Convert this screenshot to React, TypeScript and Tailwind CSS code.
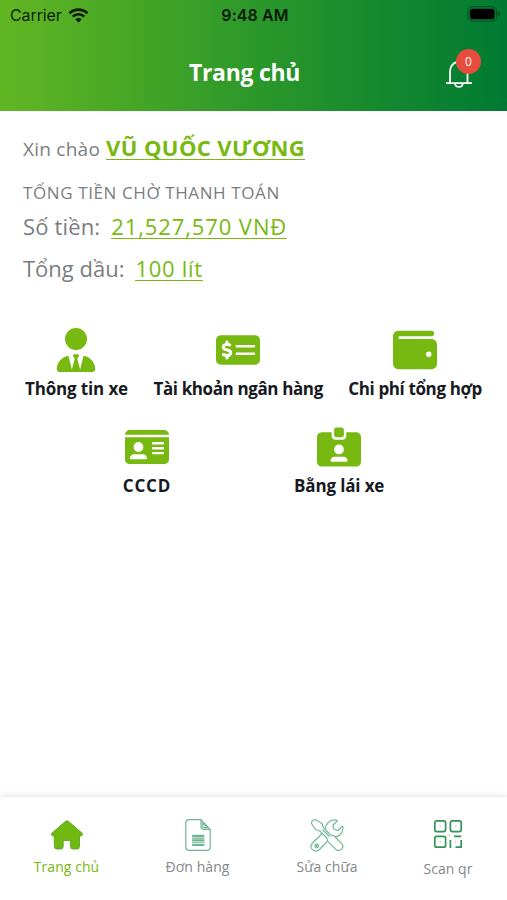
import React from 'react';
import { FaUserTie, FaMoneyCheckDollar, FaWallet, FaIdCard, FaIdCardClip } from 'react-icons/fa6';

const font = "font-['Open_Sans','Noto_Sans',sans-serif]";

const StatusBar: React.FC = () => (
    <div className="flex h-[30px] items-center justify-between pl-[10px] pr-[7px] font-['Inter',sans-serif] text-black/85">
        <div className="flex w-[210px] items-center gap-[6px]">
            <span className="text-[16px] leading-[30px] tracking-[-0.1px]">Carrier</span>
            <svg width="21" height="15" viewBox="0 0 20 15" fill="none" stroke="currentColor" strokeWidth="2.6">
                <path d="M1 5.2C6 .4 14 .4 19 5.2" />
                <path d="M4.2 8.6C7.6 5.4 12.4 5.4 15.8 8.6" />
                <path d="M10 14.4 6.8 11.3C8.7 9.6 11.3 9.6 13.2 11.3Z" fill="currentColor" stroke="none" />
            </svg>
        </div>
        <span className="text-[16px] font-semibold leading-[30px] tracking-[0.1px]">9:48 AM</span>
        <div className="flex w-[210px] justify-end">
            <svg className="mt-[-2px]" width="33" height="16" viewBox="0 0 33 16">
                <rect x=".7" y=".7" width="29" height="14.6" rx="4.4" fill="none" stroke="#000" strokeOpacity=".4" />
                <rect x="2.8" y="2.8" width="24.8" height="10.4" rx="2.8" fill="#000" />
                <path d="M31 5.5Q32.8 6.4 32.8 8T31 10.5Z" fill="#000" fillOpacity=".45" />
            </svg>
        </div>
    </div>
);

const Header: React.FC = () => (
    <header className="h-[111px] bg-linear-[90deg,#62b622,#2c982a_50%,#007a33]">
        <StatusBar />
        <div className="flex h-[84px] items-center justify-between pr-[30px]">
            <div className="w-[48px]" />
            <h1 className="text-[23px] font-bold leading-[30px] tracking-[-0.3px] text-white">Trang chủ</h1>
            <button className="mb-[4px] relative h-[40px] w-[36px]">
                <svg className="absolute left-[4px] top-[9px]" width="28" height="30" viewBox="0 0 28 30" fill="none" stroke="#fff" strokeWidth="1.8">
                    <path d="M5 24V12.5C5 7 8.6 3 13.8 3S22.5 7 22.5 12.5V24" />
                    <path d="M1 24.2H27M10 24.5C10.5 29 17.3 29 17.8 24.5" />
                </svg>
                <span className="absolute right-[-4px] top-[-1px] flex h-[25px] w-[25px] items-center justify-center rounded-full bg-[#e74c3c] text-xs text-white">0</span>
            </button>
        </div>
    </header>
);

const Summary: React.FC = () => (
    <section className="px-[23px] pt-[20px] text-[#7b7d80]">
        <div className="flex h-[36px] items-baseline gap-[6px] leading-[36px]">
            <span className="text-[19px] tracking-[0.25px]">Xin chào</span>
            <span className="border-b border-[#77b910] text-[22px] font-bold leading-[24px] tracking-[0.4px] text-[#77b910]">VŨ QUỐC VƯƠNG</span>
        </div>
        <div className="mt-[13px] h-[25px] text-[17px] leading-[26px] tracking-[0.6px]">TỔNG TIỀN CHỜ THANH TOÁN</div>
        <div className="flex h-[42px] items-baseline gap-[11px] text-[22px] leading-[42px]">
            <span className="tracking-[0.15px]">Số tiền:</span>
            <span className="border-b border-[#77b910] leading-[24px] tracking-[0.9px] text-[#77b910]">21,527,570 VNĐ</span>
        </div>
        <div className="flex h-[42px] items-baseline gap-[11px] text-[22px] leading-[42px]">
            <span>Tổng dầu:</span>
            <span className="border-b border-[#77b910] leading-[24px] tracking-[0.7px] text-[#77b910]">100 lít</span>
        </div>
    </section>
);

interface MenuItemProps {
    icon: React.ReactNode;
    label: string;
    spacing?: string;
}

const MenuItem: React.FC<MenuItemProps> = ({ icon, label, spacing = 'tracking-[-0.15px]' }) => (
    <button className="flex flex-col items-center text-[#77b910]">
        {icon}
        <span className={`mt-[4px] whitespace-nowrap text-[17px] font-bold leading-[26px] text-[#171a1f] ${spacing}`}>{label}</span>
    </button>
);

const Menu: React.FC = () => (
    <section className="pt-[39px]">
        <div className="flex justify-between px-[25px]">
            <MenuItem icon={<FaUserTie size={44} />} label="Thông tin xe" />
            <MenuItem icon={<FaMoneyCheckDollar size={44} />} label="Tài khoản ngân hàng" spacing="tracking-[-0.38px]" />
            <MenuItem icon={<FaWallet size={44} />} label="Chi phí tổng hợp" spacing="tracking-[-0.38px]" />
        </div>
        <div className="mt-[23px] flex justify-center gap-[123px]">
            <MenuItem icon={<FaIdCard size={44} />} label="CCCD" spacing="tracking-[0.8px]" />
            <MenuItem icon={<FaIdCardClip size={44} />} label="Bằng lái xe" />
        </div>
    </section>
);

const HomeIcon = () => (
    <svg width="34" height="34" viewBox="0 0 34 34" fill="#71b810" stroke="#4fa51c" strokeWidth=".8" strokeLinejoin="round">
        <path d="M15.6 3.2 2 15C.5 16.5 1.5 18.3 4.3 18V28.5Q4.3 31 6.8 31H11Q13.2 31 13.2 28.5V22.5H20.5V28.5Q20.5 31 22.7 31H27.2Q29.5 31 29.5 28.5V18C32.4 18.3 33.5 16.5 32 15L18.3 3.2Q17 2.2 15.6 3.2Z" />
    </svg>
);

const OrderIcon = () => (
    <svg width="34" height="34" viewBox="0 0 34 34" fill="none" stroke="#6fb592" strokeWidth="1.2" strokeLinejoin="round">
        <path d="M20 1.6H8.5Q4.8 1.6 4.8 5.3V28.7Q4.8 32.4 8.5 32.4H25.5Q29.2 32.4 29.2 28.7V11.3Z" />
        <path d="M20 1.6V8.6Q20 11.3 22.7 11.3H29.2M21.8 4.6V8.2Q21.8 9.6 23.2 9.6H26.5Z" />
        <path strokeWidth="2.2" strokeLinecap="round" d="M12 17.8H22.5M12 22.4H22.5M12 27H22.5" />
        <path strokeWidth="1.1" d="M11 20.1H23.5M11 24.7H23.5" />
    </svg>
);

const RepairIcon = () => (
    <svg width="34" height="34" viewBox="0 0 34 34" fill="#fff" stroke="#72b994" strokeWidth="1.2" strokeLinejoin="round">
        <path d="M2.6 24.8 15.5 12.5C14.5 6.5 20 .5 27 2.3Q27.5 2.6 27 3.2L22.8 7.2 24 11.3 28 12.5 32 8.3Q32.8 8 32.8 9C33.3 15.8 27.5 20.3 21.5 18.8L9.5 31.5C4.5 35.5-2 30 2.6 24.8Z" />
        <circle cx="6.7" cy="28" r="1.8" />
        <circle cx="6.7" cy="28" r=".5" />
        <path d="M1.8 6Q.8 2 5.3 1.5L12 5.5 13.5 9.7 20.5 16.8 23.5 17.5 31.8 25.6C34.8 30 30.5 34 26 31.7L17.5 23.2 17 20.2 9.8 13 5.5 11.5Z" />
        <path fill="none" d="M12.5 11.5 19.5 18.5" />
    </svg>
);

const QrIcon = () => (
    <svg width="34" height="34" viewBox="0 0 34 34" fill="none" stroke="#34935a" strokeWidth="1.7">
        <rect x="3.8" y="2.8" width="10.8" height="10.8" rx="2" />
        <rect x="19.4" y="2.8" width="10.8" height="10.8" rx="2" />
        <rect x="3.8" y="18.4" width="10.8" height="10.8" rx="2" />
        <path strokeWidth="1.2" strokeOpacity=".6" d="M8.6 8.2H9.8M24.2 8.2H25.4M8.6 23.8H9.8M18 17.4H19.2M24.2 23.8H25.4" />
        <path d="M23 18.4H30.2M19.4 22V30M30.2 22V29.2H24.5" />
    </svg>
);

const tabs = [
    { label: 'Trang chủ', icon: <HomeIcon />, style: 'w-[133px] text-[#77b910]' },
    { label: 'Đơn hàng', icon: <OrderIcon />, style: 'w-[129px] text-[#85888b]' },
    { label: 'Sửa chữa', icon: <RepairIcon />, style: 'w-[130px] text-[#85888b]' },
    { label: 'Scan qr', icon: <QrIcon />, style: 'w-[112px] gap-[2px] text-[#85888b]' },
];

const App: React.FC = () => {
    return (
        <div className={`flex h-[900px] w-[507px] flex-col overflow-hidden bg-white ${font}`}>
            <Header />
            <main className="grow">
                <Summary />
                <Menu />
            </main>
            <nav className="flex h-[103px] bg-white pt-[21px] shadow-[0_0_7px_rgba(0,0,0,0.16)]">
                {tabs.map((tab) => (
                    <button key={tab.label} className={`flex flex-col items-center justify-start ${tab.style}`}>
                        {tab.icon}
                        <span className="mt-[5px] text-[14px] leading-[20px] tracking-[0.05px]">{tab.label}</span>
                    </button>
                ))}
            </nav>
        </div>
    );
};

export default App;
